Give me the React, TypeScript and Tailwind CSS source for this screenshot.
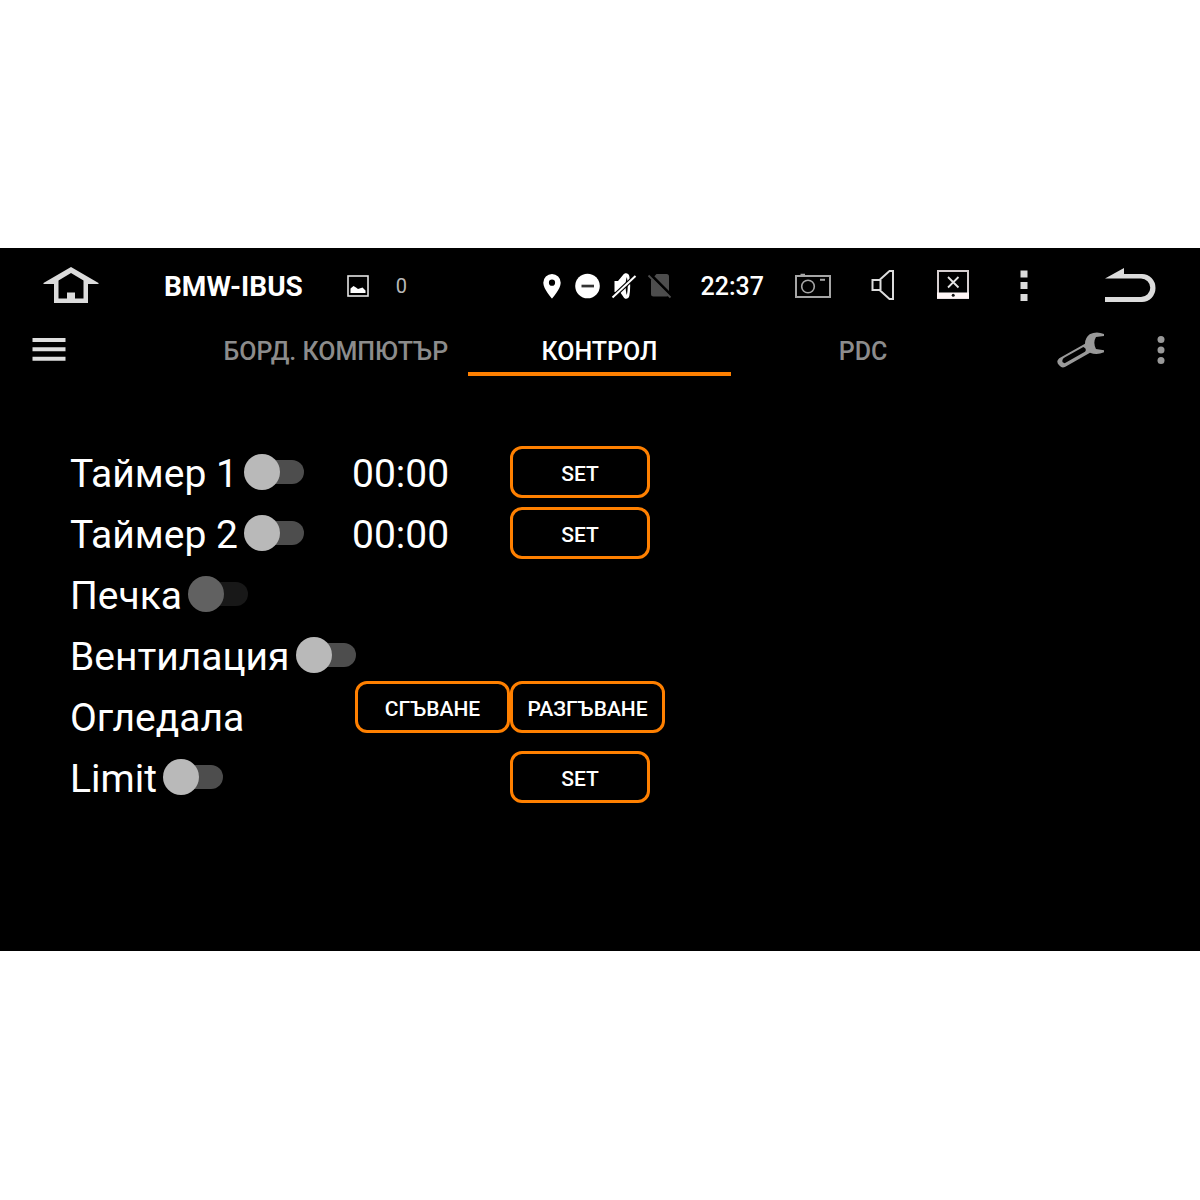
import { useState, type ReactNode } from 'react';
import clsx from 'clsx';

const TABS = ['БОРД. КОМПЮТЪР', 'КОНТРОЛ', 'PDC'];

export default function App() {
  return (
    <main className="min-h-screen bg-white pt-62 font-[Roboto,sans-serif]">
      <div className="bg-black text-white">
        <StatusBar />
        <TabBar />
        <ControlPanel />
      </div>
    </main>
  );
}

function StatusBar() {
  return (
    <header className="flex h-[76px] items-center">
      <IconButton label="Home" className="w-[141px]">
        <HomeIcon />
      </IconButton>
      <h1 className="ml-[23px] pt-0.5 text-[28px] leading-8 font-bold">BMW-IBUS</h1>
      <div className="ml-11 flex items-center gap-[27px]">
        <PictureIcon />
        <span className="text-xl leading-6 text-[#b8b8b8]">0</span>
      </div>

      <div className="ml-auto flex items-center">
        <div className="flex items-center gap-2.5">
          <PinIcon />
          <DoNotDisturbIcon />
          <MutedIcon />
          <NoSimIcon />
        </div>
        <time className="mr-3.5 ml-7 pt-0.5 text-[25px] leading-8 font-medium">22:37</time>
        <IconButton label="Screenshot" className="w-[70px]">
          <CameraIcon />
        </IconButton>
        <IconButton label="Volume" className="w-[70px]">
          <SpeakerIcon />
        </IconButton>
        <IconButton label="Screen off" className="w-[70px]">
          <ScreenOffIcon />
        </IconButton>
        <IconButton label="Recent apps" className="w-[71px]">
          <SquareDotsIcon />
        </IconButton>
        <IconButton label="Back" className="w-[141px]">
          <BackIcon />
        </IconButton>
      </div>
    </header>
  );
}

function TabBar() {
  const [active, setActive] = useState(1);

  return (
    <nav className="flex h-[52px]">
      <div className="flex w-[204px] shrink-0">
        <IconButton label="Menu" className="w-[98px]">
          <MenuIcon />
        </IconButton>
      </div>
      <div role="tablist" className="grid flex-1 grid-cols-3">
        {TABS.map((tab, i) => (
          <button
            key={tab}
            type="button"
            role="tab"
            aria-selected={i === active}
            onClick={() => setActive(i)}
            className={clsx(
              'border-b-4 pt-2 text-[25px] leading-8 font-medium whitespace-nowrap',
              i === active ? 'border-[#ff8000] text-white' : 'border-transparent text-[#8c8c8c]',
            )}
          >
            {tab}
          </button>
        ))}
      </div>
      <div className="flex w-[205px] shrink-0 justify-end">
        <IconButton label="Settings" className="w-[83px]">
          <WrenchIcon />
        </IconButton>
        <IconButton label="More" className="w-[78px]">
          <RoundDotsIcon />
        </IconButton>
      </div>
    </nav>
  );
}

function ControlPanel() {
  return (
    <section className="px-[70px] pt-[70px] pb-[148px] text-[39px] leading-12">
      <Row className="mb-[9px]">
        <Toggle label="Таймер 1" />
        <time className="pt-1">00:00</time>
        <OutlineButton className="w-[140px]">SET</OutlineButton>
      </Row>
      <Row className="mb-[9px]">
        <Toggle label="Таймер 2" />
        <time className="pt-1">00:00</time>
        <OutlineButton className="w-[140px]">SET</OutlineButton>
      </Row>
      <Row className="mb-[9px]">
        <Toggle label="Печка" disabled />
      </Row>
      <Row>
        <Toggle label="Вентилация" />
      </Row>
      <Row className="mb-[9px]">
        <span className="pt-[13px]">Огледала</span>
        <OutlineButton className="w-[155px] justify-self-end">СГЪВАНЕ</OutlineButton>
        <OutlineButton className="w-[155px]">РАЗГЪВАНЕ</OutlineButton>
      </Row>
      <Row>
        <Toggle label="Limit" />
        <OutlineButton className="col-start-3 w-[140px]">SET</OutlineButton>
      </Row>
    </section>
  );
}

function Row({ className, children }: { className?: string; children: ReactNode }) {
  return <div className={clsx('grid grid-cols-[282px_158px_1fr] items-start', className)}>{children}</div>;
}

function Toggle({ label, disabled = false }: { label: string; disabled?: boolean }) {
  return (
    <label className="flex items-center gap-1.5 whitespace-nowrap">
      <span className="pt-1">{label}</span>
      <input
        type="checkbox"
        role="switch"
        disabled={disabled}
        className="relative h-9 w-[60px] shrink-0 appearance-none before:absolute before:inset-x-1.5 before:inset-y-1.5 before:right-0 before:rounded-full before:bg-[#4d4d4d] after:absolute after:top-0 after:left-0 after:size-9 after:rounded-full after:bg-[#b9b9b9] checked:before:bg-[#804000] checked:after:translate-x-6 checked:after:bg-[#ff8000] disabled:before:bg-[#181818] disabled:after:bg-[#616161]"
      />
    </label>
  );
}

function OutlineButton({ className, children }: { className?: string; children: ReactNode }) {
  return (
    <button
      type="button"
      className={clsx(
        'flex h-13 items-center justify-center rounded-xl border-3 border-[#ff8000] pt-1 text-[21px] leading-6 font-medium',
        className,
      )}
    >
      {children}
    </button>
  );
}

function IconButton({ label, className, children }: { label: string; className?: string; children: ReactNode }) {
  return (
    <button type="button" aria-label={label} className={clsx('flex shrink-0 items-center justify-center', className)}>
      {children}
    </button>
  );
}

function HomeIcon() {
  return (
    <svg width="56" height="38" viewBox="0 0 56 38" fill="#dcdcdc">
      <path
        fillRule="evenodd"
        d="M28 0 L55.5 16 V17 H45 V36 H11 V17 H0.5 V16 Z M28 6 L15.5 13.5 V31.5 H24 V25.5 H32 V31.5 H40.5 V13.5 Z"
      />
    </svg>
  );
}

function PictureIcon() {
  return (
    <svg width="22" height="22" viewBox="0 0 22 22">
      <rect x="1" y="1" width="20" height="20" fill="none" stroke="#e4e4e4" strokeWidth="1.6" />
      <path fill="#fff" d="M3.5 18 V13.5 L6.5 11 L9 12.5 L11 14 L15.5 12.5 L18.5 15.5 V18 Z" />
    </svg>
  );
}

function PinIcon() {
  return (
    <svg width="26" height="26" viewBox="0 0 26 26">
      <path
        fill="#fff"
        fillRule="evenodd"
        d="M13 1 A8.7 8.7 0 0 0 4.3 9.7 C4.3 16 13 25.5 13 25.5 S21.7 16 21.7 9.7 A8.7 8.7 0 0 0 13 1 Z M13 6.6 A3.1 3.1 0 1 1 13 12.8 A3.1 3.1 0 1 1 13 6.6 Z"
      />
    </svg>
  );
}

function DoNotDisturbIcon() {
  return (
    <svg width="26" height="26" viewBox="0 0 26 26">
      <circle cx="12.5" cy="13" r="12.3" fill="#fff" />
      <rect x="6.5" y="11.7" width="12.5" height="2.7" fill="#333" />
    </svg>
  );
}

function MutedIcon() {
  return (
    <svg width="26" height="28" viewBox="0 0 26 28">
      <path fill="#fff" d="M3.5 9 H7 L12 3 C13.5 0.5 17.5 0.5 18.3 4 C19.5 10 19.5 18 18.3 24 C17.5 27.5 13.5 27.5 12.5 25 L9 20 H3.5 Z" />
      <path fill="#000" d="M15.8 5 C17 10 17 18 15.8 23 C14.2 18 14.2 10 15.8 5 Z" />
      <path stroke="#000" strokeWidth="4.4" d="M1.5 25.5 L24.5 4" />
      <path stroke="#fff" strokeWidth="2" d="M1.5 25.5 L24.5 4" />
    </svg>
  );
}

function NoSimIcon() {
  return (
    <svg width="26" height="26" viewBox="0 0 26 26">
      <path fill="#4d4d4d" d="M9.5 1 H19.5 Q22 1 22 3.5 V21 Q22 23.5 19.5 23.5 H6.5 Q4 23.5 4 21 V7 Z" />
      <path stroke="#000" strokeWidth="3" d="M3.5 1.5 L25.5 23.5" />
      <path stroke="#4d4d4d" strokeWidth="1.8" d="M1.5 2.5 L23.5 24.5" />
    </svg>
  );
}

function CameraIcon() {
  return (
    <svg width="36" height="26" viewBox="0 0 36 26" fill="none" stroke="#a6a6a6">
      <rect x="1" y="3" width="34" height="21" strokeWidth="2" />
      <path d="M5.5 1.5 H10" strokeWidth="1.5" />
      <circle cx="13" cy="13.5" r="6.3" strokeWidth="1.6" />
      <path d="M25 6.8 H30" strokeWidth="2" />
    </svg>
  );
}

function SpeakerIcon() {
  return (
    <svg width="24" height="32" viewBox="0 0 24 32" fill="none" stroke="#dcdcdc" strokeWidth="2">
      <path d="M9.5 10 V20 M1.5 10 H8.5 L18.5 1 H22 V29 H18.5 L8.5 20 H1.5 Z" />
    </svg>
  );
}

function ScreenOffIcon() {
  return (
    <svg width="32" height="32" viewBox="0 0 32 32">
      <rect x="1" y="1" width="30" height="27" fill="none" stroke="#d6cfd0" strokeWidth="2" />
      <rect x="0" y="22.5" width="32" height="6" fill="#fff6f6" />
      <circle cx="16.2" cy="25.2" r="1.5" fill="#111" />
      <path stroke="#e4e4e4" strokeWidth="1.8" d="M11 7 L21.5 17.5 M21.5 7 L11 17.5" />
    </svg>
  );
}

function SquareDotsIcon() {
  return (
    <svg width="8" height="32" viewBox="0 0 8 32" fill="#dcdcdc">
      <path d="M0.5 0.5 h7 v7 h-7 Z M0.5 12 h7 v7 h-7 Z M0.5 24 h7 v7 h-7 Z" />
    </svg>
  );
}

function BackIcon() {
  return (
    <svg width="52" height="36" viewBox="0 0 52 36">
      <path fill="#dcdcdc" d="M1 10.5 L20 0 V6 H38 A13.5 14 0 0 1 38 34 H1 V29 H37 A9 9 0 0 0 37 10.5 Z" />
    </svg>
  );
}

function MenuIcon() {
  return (
    <svg width="34" height="26" viewBox="0 0 34 26" stroke="#dedede" strokeWidth="4">
      <path d="M0.5 3 H33.5 M0.5 12.3 H33.5 M0.5 21.7 H33.5" />
    </svg>
  );
}

function WrenchIcon() {
  return (
    <svg width="48" height="36" viewBox="0 0 144 108" fill="#999">
      <path
        fillRule="evenodd"
        d="M141 6 L141 12 L117 15 Q107 32 117 51 L141 55 L141 61 Q119 70 99 62 L25 104 Q15 110 8 101 Q-3 91 3 83 Q6 79 12 76 L84 35 Q84 18 98 7 Q118 -4 141 6 Z M79 45 L24 76 Q13 82 17 91 L23 94 L84 59 Q91 50 79 45 Z"
      />
    </svg>
  );
}

function RoundDotsIcon() {
  return (
    <svg width="8" height="28" viewBox="0 0 8 28" fill="#999">
      <circle cx="4" cy="3.5" r="3.5" />
      <circle cx="4" cy="14" r="3.5" />
      <circle cx="4" cy="24.5" r="3.5" />
    </svg>
  );
}
